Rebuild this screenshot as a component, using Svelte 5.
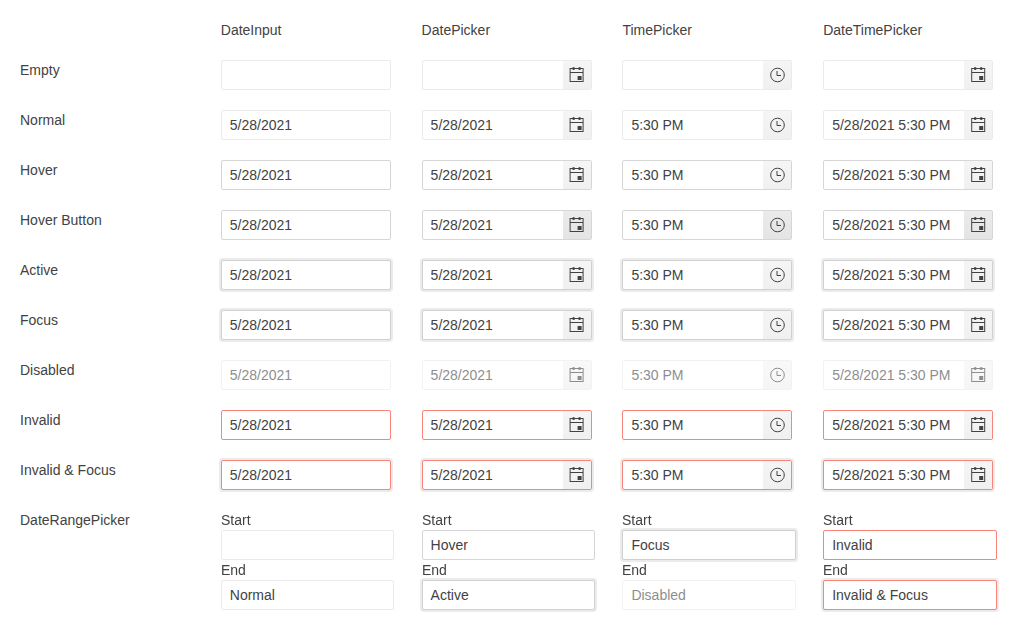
<script>
  const headers = ['DateInput', 'DatePicker', 'TimePicker', 'DateTimePicker'];
  const values = ['5/28/2021', '5/28/2021', '5:30 PM', '5/28/2021 5:30 PM'];
  const rows = [
    { label: 'Empty', state: '' },
    { label: 'Normal', state: '' },
    { label: 'Hover', state: 'hover' },
    { label: 'Hover Button', state: 'hover hover-button' },
    { label: 'Active', state: 'focus' },
    { label: 'Focus', state: 'focus' },
    { label: 'Disabled', state: 'disabled' },
    { label: 'Invalid', state: 'invalid' },
    { label: 'Invalid & Focus', state: 'focus invalid' }
  ];
  const ranges = [
    [{ text: '', state: '' }, { text: 'Normal', state: '' }],
    [{ text: 'Hover', state: 'hover' }, { text: 'Active', state: 'focus' }],
    [{ text: 'Focus', state: 'focus' }, { text: 'Disabled', state: 'disabled' }],
    [{ text: 'Invalid', state: 'invalid' }, { text: 'Invalid & Focus', state: 'focus invalid' }]
  ];
</script>

<main>
  <span></span>
  {#each headers as header}
    <span>{header}</span>
  {/each}

  {#each rows as row, r}
    <span>{row.label}</span>
    {#each values as value, c}
      <div class="field {row.state}">
        <span class="value">{r === 0 ? '' : value}</span>
        {#if c > 0}
          <span class="button">
            {#if c === 2}
              <svg viewBox="0 0 16 16">
                <g transform="translate(0.5 0)" fill="none" stroke="currentColor">
                  <circle cx="8" cy="8" r="6.800" />
                  <path d="M7.500 4v4.500H11.500" />
                </g>
              </svg>
            {:else}
              <svg viewBox="0 0 16 16">
                <g transform="translate({c === 1 ? -0.4 : 0.2} 0)" fill="currentColor">
                  <path
                    fill-rule="evenodd"
                    d="M1 1h14v14H1ZM2 2v3h12V2ZM2 6v8h12V6ZM9 9h4v4H9Z"
                  />
                  <ellipse cx="5" cy="1.500" rx="1.400" ry="1.500" />
                  <ellipse cx="11" cy="1.500" rx="1.400" ry="1.500" />
                </g>
              </svg>
            {/if}
          </span>
        {/if}
      </div>
    {/each}
  {/each}

  <span>DateRangePicker</span>
  {#each ranges as [start, end]}
    <div class="range">
      <span class="caption">Start</span>
      <div class="field {start.state}"><span class="value">{start.text}</span></div>
      <span class="caption">End</span>
      <div class="field {end.state}"><span class="value">{end.text}</span></div>
    </div>
  {/each}
</main>

<style>
  :global(body) {
    margin: 0;
    background: #fff;
  }
  main {
    display: grid;
    grid-template-columns: repeat(5, minmax(0, 1fr));
    gap: 20px;
    padding: 20px;
    color: #424242;
    font: 14px/20px 'Liberation Sans', Arial, sans-serif;
  }
  .field {
    display: flex;
    box-sizing: border-box;
    width: 170px;
    height: 30px;
    border: 1px solid #ebebeb;
    border-radius: 2px;
    background: #fff;
  }
  .value {
    flex: 1;
    padding: 4px 8px;
    white-space: nowrap;
  }
  .button {
    display: flex;
    flex: none;
    align-items: center;
    justify-content: center;
    width: 28px;
    background: linear-gradient(#f5f5f5, #f0f0f0);
  }
  svg {
    display: block;
    width: 16px;
    height: 16px;
    overflow: visible;
  }
  .hover,
  .focus {
    border-color: #d6d6d6;
  }
  .focus {
    border-color: #d0d0d0;
    box-shadow: 0 0 0 2px rgba(0, 0, 0, 0.08);
  }
  .hover-button .button {
    background: linear-gradient(#ebebeb, #e4e4e4);
  }
  .disabled {
    opacity: 0.6;
  }
  .invalid {
    border-color: #f98479;
  }
  .range {
    display: flex;
    flex-direction: column;
  }
  .range .field {
    width: 173.5px;
  }
  .caption {
    will-change: transform;
  }
</style>
